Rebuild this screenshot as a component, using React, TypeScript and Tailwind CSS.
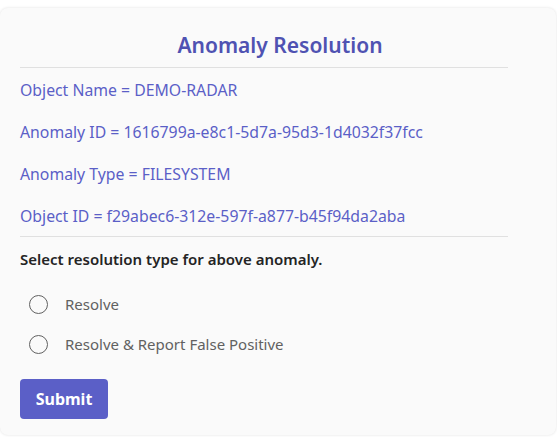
export default function App() {
  const rows = [
    'Object Name = DEMO-RADAR',
    'Anomaly ID = 1616799a-e8c1-5d7a-95d3-1d4032f37fcc',
    'Anomaly Type = FILESYSTEM',
    'Object ID = f29abec6-312e-597f-a877-b45f94da2aba',
  ]

  return (
    <div className="min-h-[437px] bg-white pt-2 font-['Noto_Sans',sans-serif]">
      <div className="w-[556px] h-[427px] rounded-lg bg-[#fafafa] shadow-[0_0_3px_rgba(0,0,0,0.12)] pl-5 pr-12 pt-4">
        <h1 className="h-[43px] -mr-8 text-center text-[21px] font-semibold text-[#4f52b2] leading-[43px]">
          Anomaly Resolution
        </h1>
        <div className="border-t border-[#e0e0e0]" />

        {/* Anomaly details */}
        <div className="flex flex-col pt-[2px]">
          {rows.map((row) => (
            <div key={row} className="h-[42px] flex items-center text-[15.8px] text-[#5b5fc7]">
              {row}
            </div>
          ))}
        </div>
        <div className="border-t border-[#e0e0e0] -mt-[2px]" />

        <p className="h-[44px] flex items-center text-[15px] font-semibold text-[#242424]">
          Select resolution type for above anomaly.
        </p>

        <div className="flex flex-col pl-[9px] pt-[3px]">
          {['Resolve', 'Resolve & Report False Positive'].map((label) => (
            <label key={label} className="h-[40px] flex items-center gap-[17px] text-[15px] text-[#616161]">
              <span className="w-[19px] h-[19px] rounded-full border border-[#616161]" />
              {label}
            </label>
          ))}
        </div>

        <button className="mt-[15px] w-[88px] h-[40px] rounded-[4px] bg-[#5b5fc7] text-white text-[16px] font-bold">
          Submit
        </button>
      </div>
    </div>
  )
}
